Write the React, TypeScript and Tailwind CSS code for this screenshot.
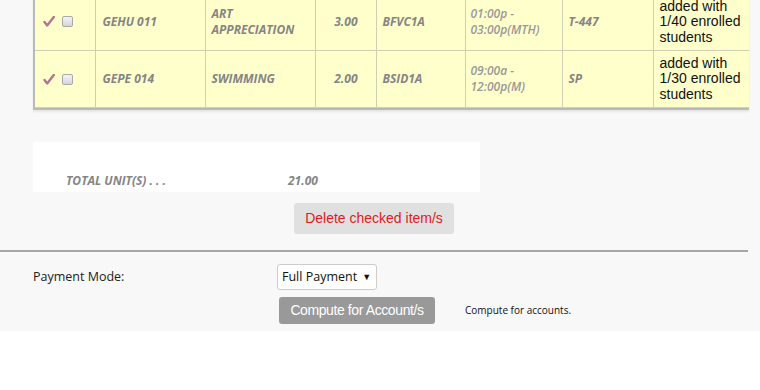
import React from "react";

type Row = {
  code: string;
  title: string[];
  units: string;
  section: string;
  time: string[];
  room: string;
  remark: string[];
};

const rows: Row[] = [
  {
    code: "GEHU 011",
    title: ["ART", "APPRECIATION"],
    units: "3.00",
    section: "BFVC1A",
    time: ["01:00p -", "03:00p(MTH)"],
    room: "T-447",
    remark: ["added with", "1/40 enrolled", "students"],
  },
  {
    code: "GEPE 014",
    title: ["SWIMMING"],
    units: "2.00",
    section: "BSID1A",
    time: ["09:00a -", "12:00p(M)"],
    room: "SP",
    remark: ["added with", "1/30 enrolled", "students"],
  },
];

const Check = () => (
  <svg width="12" height="11" viewBox="0 0 12 11" className="shrink-0">
    <path
      d="M1.5 6 L4.2 9.4 L10.8 1"
      fill="none"
      stroke="#b07690"
      strokeWidth="2.4"
      strokeLinecap="round"
      strokeLinejoin="round"
    />
  </svg>
);

const Box = () => (
  <span className="inline-block w-[11px] h-[11px] rounded-[2px] border border-[#a9a9a9] bg-gradient-to-b from-[#f4f4f4] to-[#d6d6d6]" />
);

const cell =
  "border border-[#cfcfb4] align-middle text-[12px] font-bold italic text-[#858585] leading-[16px]";

export default function App() {
  return (
    <div className="w-[760px] h-[390px] bg-white overflow-hidden" style={{ fontFamily: "'Open Sans', sans-serif" }}>
      <div className="bg-[#f8f8f8] h-[331px] overflow-hidden">
        <div className="ml-[33px] w-[716px] -mt-[7px] border-l-2 border-b-2 border-r border-[#b9b9b9] shadow-[0_2px_2px_rgba(0,0,0,0.08)]">
          <table className="w-full border-collapse table-fixed bg-[#ffffcc]">
            <colgroup>
              <col className="w-[60px]" />
              <col className="w-[110px]" />
              <col className="w-[110px]" />
              <col className="w-[61px]" />
              <col className="w-[89px]" />
              <col className="w-[97px]" />
              <col className="w-[91px]" />
              <col className="w-[96px]" />
            </colgroup>
            <tbody>
              {rows.map((r, i) => (
                <tr key={i} className="h-[57px]">
                  <td className="border-b border-r border-[#cfcfb4] align-middle pl-[8px]">
                    <div className="flex items-center gap-[7px]">
                      <Check />
                      <Box />
                    </div>
                  </td>
                  <td className={`${cell} pl-[7px]`}>{r.code}</td>
                  <td className={`${cell} pl-[6px]`}>
                    {r.title.map((t) => (
                      <div key={t}>{t}</div>
                    ))}
                  </td>
                  <td className={`${cell} pr-[18px] text-right`}>{r.units}</td>
                  <td className={`${cell} pl-[6px]`}>{r.section}</td>
                  <td className={`${cell} pl-[5px] font-semibold text-[#999999]`}>
                    {r.time.map((t) => (
                      <div key={t}>{t}</div>
                    ))}
                  </td>
                  <td className={`${cell} pl-[6px]`}>{r.room}</td>
                  <td
                    className="border-b border-l border-[#cfcfb4] align-middle pl-[6px] text-[14px] leading-[15.5px] text-[#111]"
                    style={{ fontFamily: "'Liberation Sans', Arial, sans-serif" }}
                  >
                    {r.remark.map((t) => (
                      <div key={t}>{t}</div>
                    ))}
                  </td>
                </tr>
              ))}
            </tbody>
          </table>
        </div>

        <div className="ml-[33px] mt-[32px] w-[447px] h-[50px] bg-white flex items-end pb-[2px]">
          <span className="ml-[33px] w-[222px] text-[12px] font-bold italic text-[#858585]">TOTAL UNIT(S) . . .</span>
          <span className="text-[12px] font-bold italic text-[#858585]">21.00</span>
        </div>

        <div className="w-[748px] flex justify-center mt-[11px]">
          <button
            className="w-[160px] h-[31px] rounded-[3px] bg-[#e0e0e0] text-[#e21b1b] text-[14px]"
            style={{ fontFamily: "'Liberation Sans', Arial, sans-serif" }}
          >
            Delete checked item/s
          </button>
        </div>

        <div className="w-[748px] mt-[16px] border-t-2 border-[#a6a6a6]" />

        <div className="flex items-center mt-[12px]">
          <span className="ml-[33px] w-[244px] text-[12.5px] text-[#222]">Payment Mode:</span>
          <div className="w-[100px] h-[26px] bg-white border border-[#cccccc] rounded-[3px] flex items-center pl-[4px] text-[12.5px] text-[#111]">
            Full Payment <span className="ml-[5px] text-[9px]">▼</span>
          </div>
        </div>

        <div className="flex items-center mt-[7px]">
          <button
            className="ml-[279px] w-[156px] h-[27px] rounded-[3px] bg-[#999999] text-white text-[14px] tracking-[-0.4px]"
            style={{ fontFamily: "'Liberation Sans', Arial, sans-serif" }}
          >
            Compute for Account/s
          </button>
          <span className="ml-[30px] text-[10px] text-[#111]">Compute for accounts.</span>
        </div>
      </div>
    </div>
  );
}
